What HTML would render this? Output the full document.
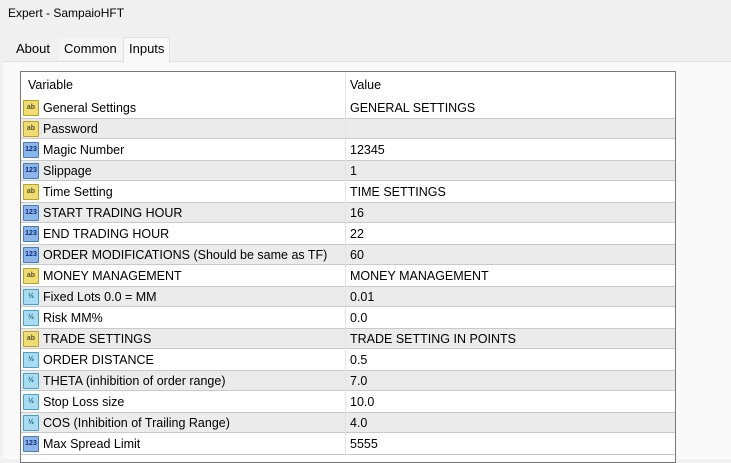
<!DOCTYPE html>
<html><head><style>
body{margin:0;width:731px;height:458px;overflow:hidden;background:#f0f0f0;font-family:"Liberation Sans",sans-serif;font-size:12.5px;color:#000;position:relative}
.title{position:absolute;left:8px;top:6px;font-size:12px}
.tab{position:absolute;top:38px;height:22px;line-height:22px;padding:0 5px;font-size:13px}
.panel{position:absolute;left:3px;top:61px;width:728px;height:397px;background:#f9f9f9;border-top:1px solid #e0e0e0}
.tbl{position:absolute;left:20px;top:71px;width:654px;height:390px;background:#fff;border:1px solid #777}
.row{position:absolute;left:0;width:654px;height:21px;line-height:22px;font-size:12.5px}
.g{background:#ebebeb;border-top:1px solid #c9c9c9;border-bottom:1px solid #c9c9c9;height:19px;line-height:20px}
.n{position:absolute;left:22px}
.v{position:absolute;left:329px}
.ic{position:absolute;left:2px;top:3px;width:14px;height:14px;font-size:7px;line-height:14px;text-align:center;font-weight:bold;border:1px solid #999;border-radius:1px}
.g .ic{top:2px}
.ab{background:#f0dc70;border-color:#b8a030;color:#553}
.i{background:#8cb6e8;border-color:#4a7ac0;color:#0a2a80}
.d{background:#a8dcf0;border-color:#4aa0c8;color:#1a5a80}
</style></head><body>
<div class="title">Expert - SampaioHFT</div>
<div class="panel"></div>
<div class="tab" style="left:11px">About</div>
<div class="tab" style="left:59px;background:#f5f5f5">Common</div>
<div class="tab" style="left:123px;top:37px;height:25px;background:#f9f9f9;border:1px solid #e0e0e0;border-bottom:none">Inputs</div>
<div class="tbl">
<div class="row" style="top:1px;height:24px;line-height:24px"><span style="position:absolute;left:7px">Variable</span><span class="v">Value</span></div>
<div class="row" style="top:25px"><span class="ic ab">ab</span><span class="n">General Settings</span><span class="v">GENERAL SETTINGS</span></div>
<div class="row g" style="top:46px"><span class="ic ab">ab</span><span class="n">Password</span><span class="v"></span></div>
<div class="row" style="top:67px"><span class="ic i">123</span><span class="n">Magic Number</span><span class="v">12345</span></div>
<div class="row g" style="top:88px"><span class="ic i">123</span><span class="n">Slippage</span><span class="v">1</span></div>
<div class="row" style="top:109px"><span class="ic ab">ab</span><span class="n">Time Setting</span><span class="v">TIME SETTINGS</span></div>
<div class="row g" style="top:130px"><span class="ic i">123</span><span class="n">START TRADING HOUR</span><span class="v">16</span></div>
<div class="row" style="top:151px"><span class="ic i">123</span><span class="n">END TRADING HOUR</span><span class="v">22</span></div>
<div class="row g" style="top:172px"><span class="ic i">123</span><span class="n">ORDER MODIFICATIONS (Should be same as TF)</span><span class="v">60</span></div>
<div class="row" style="top:193px"><span class="ic ab">ab</span><span class="n">MONEY MANAGEMENT</span><span class="v">MONEY MANAGEMENT</span></div>
<div class="row g" style="top:214px"><span class="ic d">½</span><span class="n">Fixed Lots 0.0 = MM</span><span class="v">0.01</span></div>
<div class="row" style="top:235px"><span class="ic d">½</span><span class="n">Risk MM%</span><span class="v">0.0</span></div>
<div class="row g" style="top:256px"><span class="ic ab">ab</span><span class="n">TRADE SETTINGS</span><span class="v">TRADE SETTING IN POINTS</span></div>
<div class="row" style="top:277px"><span class="ic d">½</span><span class="n">ORDER DISTANCE</span><span class="v">0.5</span></div>
<div class="row g" style="top:298px"><span class="ic d">½</span><span class="n">THETA (inhibition of order range)</span><span class="v">7.0</span></div>
<div class="row" style="top:319px"><span class="ic d">½</span><span class="n">Stop Loss size</span><span class="v">10.0</span></div>
<div class="row g" style="top:340px"><span class="ic d">½</span><span class="n">COS (Inhibition of Trailing Range)</span><span class="v">4.0</span></div>
<div class="row" style="top:361px"><span class="ic i">123</span><span class="n">Max Spread Limit</span><span class="v">5555</span></div>
<div style="position:absolute;left:0;top:382px;width:654px;border-top:1px solid #c9c9c9"></div>
<div style="position:absolute;left:324px;top:0;height:383px;border-left:1px solid #e3e3e3"></div>
</div>
</body></html>
